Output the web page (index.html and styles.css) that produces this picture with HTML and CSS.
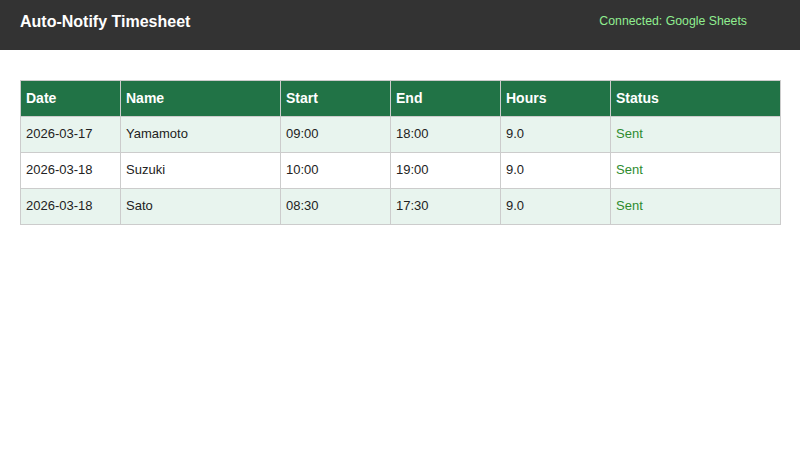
FILE: index.html
```html
<!DOCTYPE html>
<html>
<head>
<meta charset="utf-8">
<link rel="stylesheet" href="styles.css">
</head>
<body>
<header class="topbar">
  <h1 class="title">Auto-Notify Timesheet</h1>
  <span class="conn">Connected: Google Sheets</span>
</header>
<main class="content">
  <table class="sheet">
    <colgroup>
      <col class="c-date"><col class="c-name"><col class="c-start"><col class="c-end"><col class="c-hours"><col class="c-status">
    </colgroup>
    <thead>
      <tr><th>Date</th><th>Name</th><th>Start</th><th>End</th><th>Hours</th><th>Status</th></tr>
    </thead>
    <tbody>
      <tr><td>2026-03-17</td><td>Yamamoto</td><td>09:00</td><td>18:00</td><td>9.0</td><td class="sent">Sent</td></tr>
      <tr><td>2026-03-18</td><td>Suzuki</td><td>10:00</td><td>19:00</td><td>9.0</td><td class="sent">Sent</td></tr>
      <tr><td>2026-03-18</td><td>Sato</td><td>08:30</td><td>17:30</td><td>9.0</td><td class="sent">Sent</td></tr>
    </tbody>
  </table>
</main>
</body>
</html>
```
FILE: styles.css
```css
html, body {
  margin: 0;
  padding: 0;
  background: #ffffff;
  font-family: "Liberation Sans", Arial, sans-serif;
}
.topbar {
  box-sizing: border-box;
  height: 50px;
  background: #333333;
  display: flex;
  justify-content: space-between;
  align-items: flex-start;
  padding: 13px 53px 0 20px;
}
.title {
  margin: 0;
  font-size: 16px;
  line-height: 18px;
  font-weight: bold;
  color: #ffffff;
}
.conn {
  font-size: 12.3px;
  line-height: 16px;
  color: #90ee90;
}
.content {
  padding: 30px 20px;
}
.sheet {
  width: 760px;
  border-collapse: collapse;
  table-layout: fixed;
  font-size: 13px;
}
.c-date { width: 100px; }
.c-name { width: 160px; }
.c-start { width: 110px; }
.c-end { width: 110px; }
.c-hours { width: 110px; }
.c-status { width: 170px; }
.sheet th, .sheet td {
  border: 1px solid #cccccc;
  padding: 0 5px 2px;
  height: 33px;
  text-align: left;
  color: #222222;
}
.sheet th {
  background: #217346;
  color: #ffffff;
  font-size: 14px;
  font-weight: bold;
}
.sheet tbody tr:nth-child(odd) td {
  background: #e8f4ee;
}
.sheet td.sent {
  color: #2e8b2e;
}
```
